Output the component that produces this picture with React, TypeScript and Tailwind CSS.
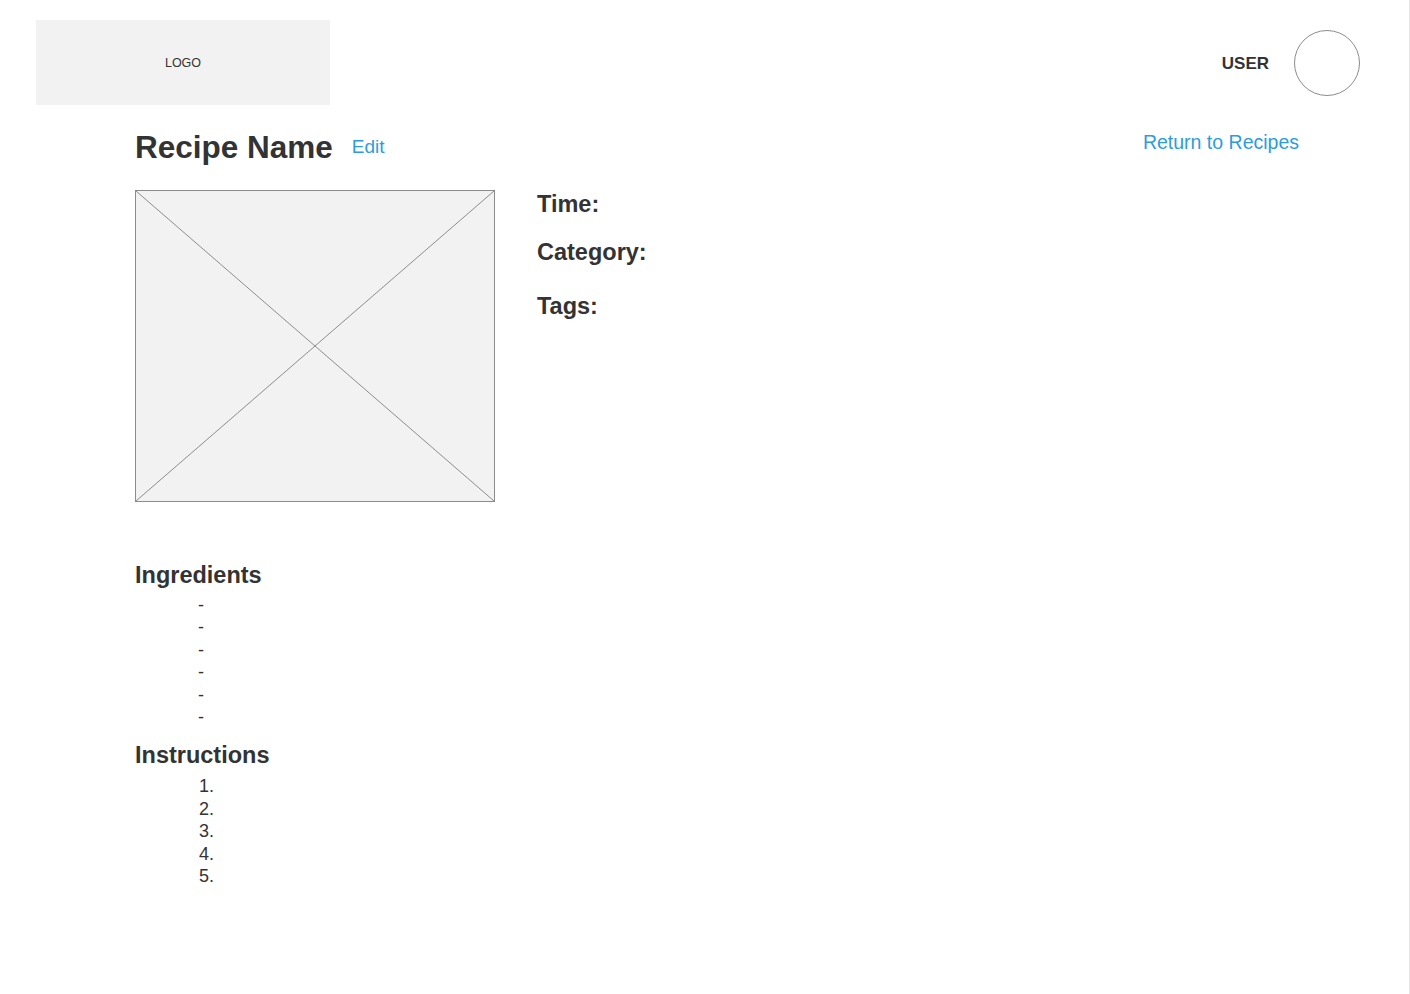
import React from 'react';

const ImagePlaceholder = () => (
  <div className="relative w-[360px] h-[312px] shrink-0 bg-[#f2f2f2] border border-[#8c8c8c]">
    <svg className="absolute inset-0 w-full h-full" viewBox="0 0 358 310" preserveAspectRatio="none">
      <line x1="0" y1="0" x2="358" y2="310" stroke="#8c8c8c" strokeWidth="1" />
      <line x1="358" y1="0" x2="0" y2="310" stroke="#8c8c8c" strokeWidth="1" />
    </svg>
  </div>
);

const Meta = ({ label, className }: { label: string; className: string }) => (
  <div className={`text-[23.5px] leading-[23px] font-bold text-[#333333] ${className}`}>{label}</div>
);

const App = () => {
  const ingredients = [1, 2, 3, 4, 5, 6];
  const steps = [1, 2, 3, 4, 5];

  return (
    <div
      className="min-h-screen bg-white border-r border-[#e6e6e6] text-[#333333]"
      style={{ fontFamily: '"Liberation Sans", Arial, sans-serif' }}
    >
      {/* header */}
      <div className="flex items-center justify-between pl-[36px] pr-[49px] pt-[20px]">
        <div className="w-[294px] h-[85px] bg-[#f2f2f2] flex items-center justify-center">
          <span className="text-[12.5px] leading-none mt-[1px]">LOGO</span>
        </div>
        <div className="flex items-center gap-[25px]">
          <span className="text-[17px] font-bold leading-none mt-[1px]">USER</span>
          <div className="w-[66px] h-[66px] rounded-full border border-[#8c8c8c]" />
        </div>
      </div>

      <div className="pl-[135px] pr-[110px]">
        {/* title row */}
        <div className="flex items-start justify-between mt-[26.5px]">
          <div className="flex items-start gap-[19px]">
            <h1 className="text-[31.5px] leading-[31px] font-bold">Recipe Name</h1>
            <a className="text-[19px] leading-[19px] text-[#2d9cdb] mt-[5.5px] cursor-pointer">Edit</a>
          </div>
          <a className="text-[19.5px] leading-[19.5px] text-[#2d9cdb] mt-[1px] cursor-pointer">Return to Recipes</a>
        </div>

        {/* image + meta */}
        <div className="flex items-start gap-[42px] mt-[27.5px]">
          <ImagePlaceholder />
          <div className="flex flex-col pt-[2.5px]">
            <Meta label="Time:" className="" />
            <Meta label="Category:" className="mt-[25px]" />
            <Meta label="Tags:" className="mt-[31px]" />
          </div>
        </div>

        {/* ingredients */}
        <h2 className="text-[23.5px] leading-[23px] font-bold mt-[61.5px]">Ingredients</h2>
        <ul className="pl-[63px] mt-[7px] text-[18px] leading-[22.6px]">
          {ingredients.map((i) => (
            <li key={i}>-</li>
          ))}
        </ul>

        {/* instructions */}
        <h2 className="text-[23.5px] leading-[23px] font-bold mt-[14.5px]">Instructions</h2>
        <ol className="pl-[64px] mt-[8.5px] text-[18px] leading-[22.5px]">
          {steps.map((n) => (
            <li key={n}>{n}.</li>
          ))}
        </ol>
      </div>
    </div>
  );
};

export default App;
